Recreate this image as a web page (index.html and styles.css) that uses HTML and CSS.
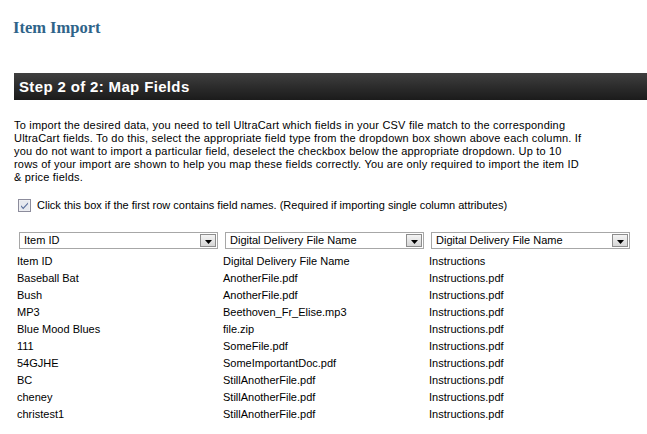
FILE: index.html
```html
<!DOCTYPE html>
<html>
<head>
<meta charset="utf-8">
<link rel="stylesheet" href="styles.css">
</head>
<body>
<div class="page">
  <h1 class="title">Item Import</h1>
  <div class="step-bar">Step 2 of 2: Map Fields</div>
  <p class="intro">To import the desired data, you need to tell UltraCart which fields in your CSV file match to the corresponding<br>UltraCart fields. To do this, select the appropriate field type from the dropdown box shown above each column. If<br>you do not want to import a particular field, deselect the checkbox below the appropriate dropdown. Up to 10<br>rows of your import are shown to help you map these fields correctly. You are only required to import the item ID<br>&amp; price fields.</p>
  <label class="check-row">
    <span class="checkbox"><svg width="13" height="13" viewBox="0 0 13 13"><rect x="0.5" y="0.5" width="12" height="12" fill="#f4f4f6" stroke="#8c8c9c"/><rect x="1.5" y="1.5" width="10" height="10" fill="#e6e8ee"/><path d="M3 6.2 L5.2 8.6 L10 3.4 L10 5 L5.2 10.2 L3 7.8 Z" fill="#5a6f9c"/></svg></span>
    <span>Click this box if the first row contains field names. (Required if importing single column attributes)</span>
  </label>
  <div class="grid">
    <div class="cell sel"><div class="select"><span class="value">Item ID</span><span class="arrow"><svg width="7" height="4" viewBox="0 0 7 4"><path d="M0 0 H7 L3.5 4 Z" fill="#000"/></svg></span></div></div>
    <div class="cell sel"><div class="select"><span class="value">Digital Delivery File Name</span><span class="arrow"><svg width="7" height="4" viewBox="0 0 7 4"><path d="M0 0 H7 L3.5 4 Z" fill="#000"/></svg></span></div></div>
    <div class="cell sel"><div class="select"><span class="value">Digital Delivery File Name</span><span class="arrow"><svg width="7" height="4" viewBox="0 0 7 4"><path d="M0 0 H7 L3.5 4 Z" fill="#000"/></svg></span></div></div>

    <div class="cell">Item ID</div><div class="cell">Digital Delivery File Name</div><div class="cell">Instructions</div>
    <div class="cell">Baseball Bat</div><div class="cell">AnotherFile.pdf</div><div class="cell">Instructions.pdf</div>
    <div class="cell">Bush</div><div class="cell">AnotherFile.pdf</div><div class="cell">Instructions.pdf</div>
    <div class="cell">MP3</div><div class="cell">Beethoven_Fr_Elise.mp3</div><div class="cell">Instructions.pdf</div>
    <div class="cell">Blue Mood Blues</div><div class="cell">file.zip</div><div class="cell">Instructions.pdf</div>
    <div class="cell">111</div><div class="cell">SomeFile.pdf</div><div class="cell">Instructions.pdf</div>
    <div class="cell">54GJHE</div><div class="cell">SomeImportantDoc.pdf</div><div class="cell">Instructions.pdf</div>
    <div class="cell">BC</div><div class="cell">StillAnotherFile.pdf</div><div class="cell">Instructions.pdf</div>
    <div class="cell">cheney</div><div class="cell">StillAnotherFile.pdf</div><div class="cell">Instructions.pdf</div>
    <div class="cell">christest1</div><div class="cell">StillAnotherFile.pdf</div><div class="cell">Instructions.pdf</div>
  </div>
</div>
</body>
</html>
```

FILE: styles.css
```css
html, body {
  margin: 0;
  padding: 0;
  background: #ffffff;
}
body {
  font-family: "Liberation Sans", Arial, sans-serif;
  font-size: 11px;
  color: #000;
  overflow: hidden;
}
.page {
  padding: 18px 0 0 14px;
}
.title {
  margin: 0 0 0 -1px;
  font-family: "Liberation Serif", "Times New Roman", serif;
  font-size: 16.5px;
  font-weight: bold;
  line-height: 20px;
  color: #2f6489;
}
.step-bar {
  margin-top: 35px;
  height: 27px;
  line-height: 27px;
  padding-left: 5px;
  background: linear-gradient(to bottom, #404040 0%, #2c2c2c 50%, #1b1b1b 100%);
  color: #fff;
  font-weight: bold;
  font-size: 15px;
  letter-spacing: 0.35px;
  margin-right: -20px;
}
.intro {
  margin: 19px 0 0 0;
  line-height: 13px;
  letter-spacing: 0.19px;
}
.check-row {
  display: flex;
  align-items: center;
  gap: 6px;
  margin: 13px 0 0 4px;
  height: 16px;
}
.checkbox {
  display: flex;
  width: 13px;
  height: 13px;
}
.grid {
  display: grid;
  grid-template-columns: 206px 206px 206px;
  grid-template-rows: 21px;
  grid-auto-rows: 17px;
  margin-top: 19px;
}
.cell {
  padding-left: 3px;
  line-height: 17px;
  white-space: nowrap;
}
.cell.sel {
  padding-left: 5px;
}
.select {
  display: flex;
  align-items: center;
  box-sizing: border-box;
  width: 199px;
  height: 17px;
  border: 1px solid #a7a7a7;
  background: #fff;
}
.value {
  flex: 1;
  padding-left: 4px;
  font-size: 11px;
  line-height: 15px;
}
.arrow {
  display: flex;
  align-items: center;
  justify-content: center;
  box-sizing: border-box;
  width: 16px;
  height: 13px;
  margin-right: 1px;
  border: 1px solid #8d8d8d;
  background: linear-gradient(to bottom, #f4f4f4, #d6d6d6);
}
.arrow svg {
  margin-top: 2px;
}
```
